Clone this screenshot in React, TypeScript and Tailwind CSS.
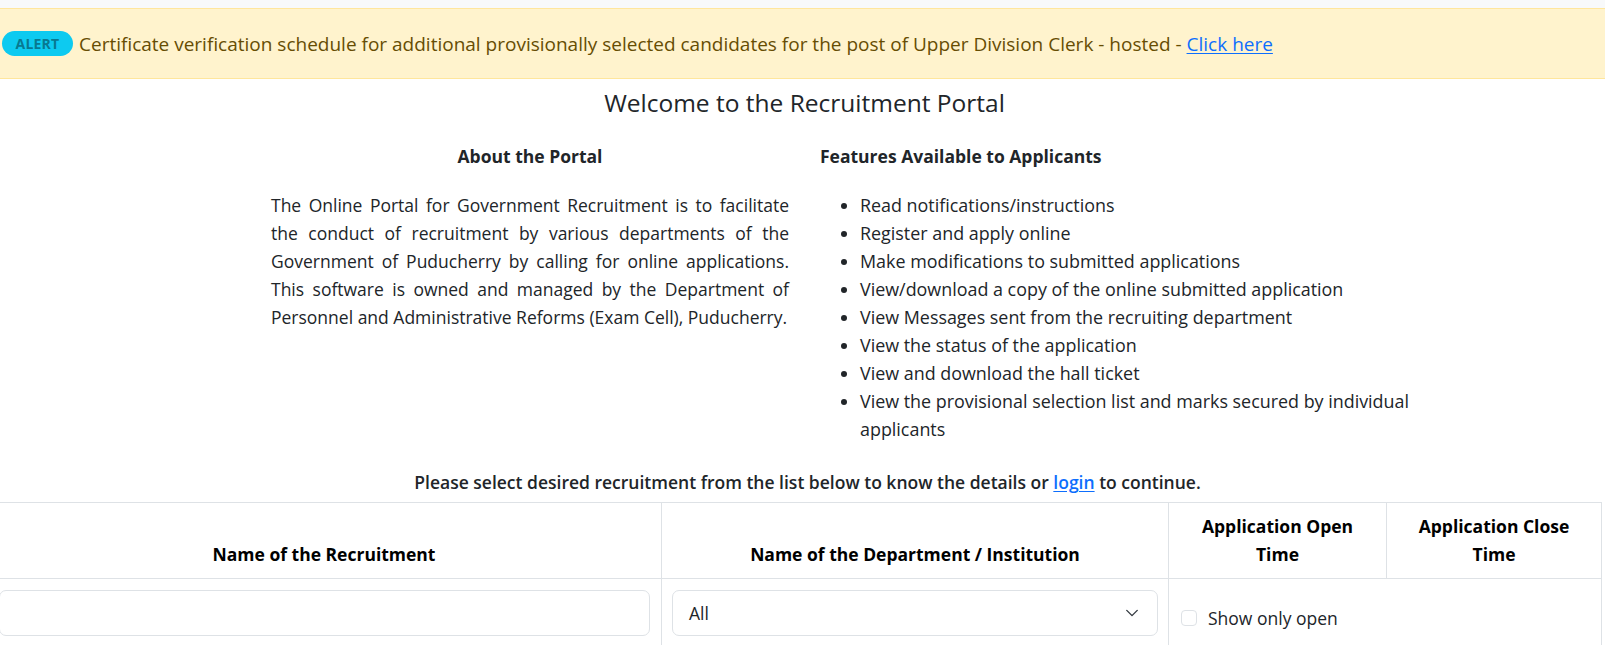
import React from "react";

const features = [
  "Read notifications/instructions",
  "Register and apply online",
  "Make modifications to submitted applications",
  "View/download a copy of the online submitted application",
  "View Messages sent from the recruiting department",
  "View the status of the application",
  "View and download the hall ticket",
];

const paraLines = [
  "The Online Portal for Government Recruitment is to facilitate",
  "the conduct of recruitment by various departments of the",
  "Government of Puducherry by calling for online applications.",
  "This software is owned and managed by the Department of",
];

export default function App() {
  return (
    <div className="w-[1605px] h-[645px] overflow-hidden bg-white text-[#212529] font-['Open_Sans','Noto_Sans',sans-serif] text-[17.5px] leading-[28px]">
      <div className="h-[8px] bg-[#f8f9fa]" />
      <div className="h-[71px] bg-[#fff3cd] border-y border-[#ffe69c] flex items-center pl-[2px] text-[#664d03] text-[19px]">
        <span className="w-[71px] h-[25px] rounded-full bg-[#0dcaf0] text-[#087990] text-[14px] font-bold flex items-center justify-center leading-none tracking-[0.2px]">
          ALERT
        </span>
        <span className="ml-[6px]">
          Certificate verification schedule for additional provisionally selected candidates for the post of Upper Division Clerk - hosted -{" "}
          <a href="#" className="text-[#0d6efd] underline underline-offset-2">
            Click here
          </a>
        </span>
      </div>

      <h1 className="mt-[7px] text-center text-[24.5px] leading-[34px] font-normal pl-[4px]">
        Welcome to the Recruitment Portal
      </h1>

      <div className="flex mt-[22px]">
        <div className="ml-[271px] w-[518px] shrink-0">
          <h2 className="text-center font-bold">About the Portal</h2>
          <div className="mt-[21px]">
            {paraLines.map((l) => (
              <div key={l} className="text-justify [text-align-last:justify] whitespace-nowrap">
                {l}
              </div>
            ))}
            <div className="whitespace-nowrap">
              Personnel and Administrative Reforms (Exam Cell), Puducherry.
            </div>
          </div>
        </div>
        <div className="ml-[31px] w-[600px] shrink-0">
          <h2 className="font-bold">Features Available to Applicants</h2>
          <ul className="mt-[21px] list-disc pl-[40px] marker:text-[#212529] text-[17.9px]">
            {features.map((f) => (
              <li key={f}>{f}</li>
            ))}
            <li>
              View the provisional selection list and marks secured by individual
              <br />
              applicants
            </li>
          </ul>
        </div>
      </div>

      <p className="mt-[25px] text-center font-semibold pl-[10px]">
        Please select desired recruitment from the list below to know the details or{" "}
        <a href="#" className="text-[#0d6efd] underline underline-offset-2">
          login
        </a>{" "}
        to continue.
      </p>

      <div className="mt-[6px] ml-[-13px] w-[1615px] border-t border-r border-[#dee2e6]">
        <div className="flex h-[76px] border-b border-[#dee2e6] font-bold text-black">
          <div className="w-[675px] border-r border-[#dee2e6] flex items-end justify-center pb-[10px] text-center">
            Name of the Recruitment
          </div>
          <div className="w-[507px] border-r border-[#dee2e6] flex items-end justify-center pb-[10px] text-center">
            Name of the Department / Institution
          </div>
          <div className="w-[218px] border-r border-[#dee2e6] flex items-end justify-center pb-[10px] text-center">
            Application Open
            <br />
            Time
          </div>
          <div className="flex-1 flex items-end justify-center pb-[10px] text-center">
            Application Close
            <br />
            Time
          </div>
        </div>
        <div className="flex h-[80px]">
          <div className="w-[675px] border-r border-[#dee2e6] pl-[12px] pr-[11px] pt-[11px]">
            <div className="h-[46px] rounded-[7px] border border-[#dee2e6] bg-white" />
          </div>
          <div className="w-[507px] border-r border-[#dee2e6] pl-[10px] pr-[10px] pt-[11px]">
            <div className="h-[46px] rounded-[7px] border border-[#dee2e6] bg-white flex items-center pl-[16px] pr-[18px] justify-between">
              <span>All</span>
              <svg width="14" height="14" viewBox="0 0 16 16" fill="none" stroke="#343a40" strokeWidth="1.6" strokeLinecap="round" strokeLinejoin="round">
                <path d="M2 5l6 6 6-6" />
              </svg>
            </div>
          </div>
          <div className="flex-1 flex items-start pt-[31px] pl-[12px]">
            <span className="w-[16px] h-[16px] rounded-[4px] border border-[#dee2e6] bg-white shrink-0" />
            <span className="ml-[11px] leading-[16px]">Show only open</span>
          </div>
        </div>
      </div>
    </div>
  );
}
